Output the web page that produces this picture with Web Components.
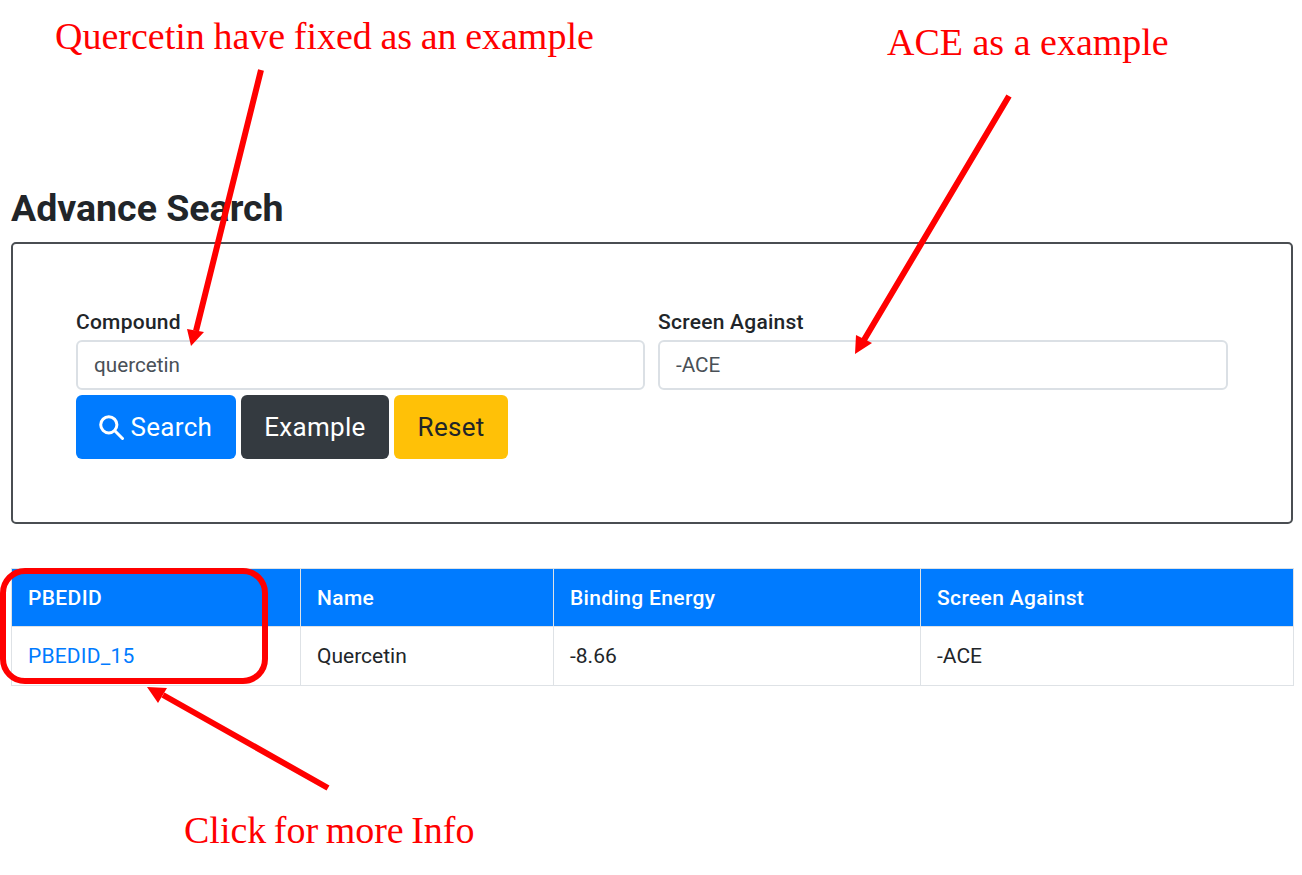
<!DOCTYPE html>
<html>
<head>
<meta charset="utf-8">
<title>Advance Search</title>
<style>
  html, body { margin: 0; background: #fff; }
  body { font-family: Roboto, "Liberation Sans", sans-serif; color: #212529; }
</style>
</head>
<body>

<template id="search-page-tmpl">
  <style>
    :host { display: block; position: relative; width: 1302px; height: 875px; overflow: hidden; box-sizing: border-box; padding: 185px 9px 0 11px; }
    h1 { margin: 0 0 10px; font-size: 37.5px; line-height: 47px; font-weight: 700; color: #212529; }
    search-panel { margin-bottom: 45px; }
  </style>
  <h1>Advance Search</h1>
  <search-panel>
    <form-field slot="left" label="Compound" value="quercetin"></form-field>
    <form-field slot="right" label="Screen Against" value="-ACE"></form-field>
    <ui-button slot="buttons" kind="primary" icon="search">Search</ui-button>
    <ui-button slot="buttons" kind="dark">Example</ui-button>
    <ui-button slot="buttons" kind="warning">Reset</ui-button>
  </search-panel>
  <result-table></result-table>
  <slot></slot>
</template>

<template id="search-panel-tmpl">
  <style>
    :host { display: block; box-sizing: border-box; height: 282px; border: 2px solid #4a4e52; border-radius: 5px; padding: 63px 64px 0 63px; }
    .row { display: grid; grid-template-columns: 569px 570px; column-gap: 13px; }
    .buttons { display: flex; gap: 5px; margin-top: 5px; }
  </style>
  <div class="row">
    <slot name="left"></slot>
    <slot name="right"></slot>
  </div>
  <div class="buttons"><slot name="buttons"></slot></div>
</template>

<template id="form-field-tmpl">
  <style>
    :host { display: block; }
    label { display: block; font-size: 21px; letter-spacing: .25px; line-height: 30px; font-weight: 500; color: #212529; margin-bottom: 3px; }
    .input { box-sizing: border-box; height: 50px; border: 2px solid #dbe0e5; border-radius: 6px; background: #fff; padding: 0 16px; font-size: 20.7px; line-height: 46px; color: #495057; }
  </style>
  <label></label>
  <div class="input"></div>
</template>

<template id="ui-button-tmpl">
  <style>
    :host { display: inline-flex; align-items: center; justify-content: center; box-sizing: border-box; height: 64px; padding: 0 23.5px; border-radius: 6px; font-size: 26px; line-height: 1; gap: 7px; letter-spacing: .3px; }
    :host([kind="primary"]) { background: #007bff; color: #fff; padding-left: 22.5px; }
    :host([kind="dark"]) { background: #343a40; color: #fff; }
    :host([kind="warning"]) { background: #ffc107; color: #212529; }
    svg { width: 25px; height: 25px; display: block; }
  </style>
  <svg viewBox="0 0 25 25" fill="none" stroke="currentColor" stroke-width="3"><circle cx="9.8" cy="9.8" r="8.1"/><path d="M15.8 15.8 L23.5 23.5" stroke-linecap="round"/></svg>
  <slot></slot>
</template>

<template id="result-table-tmpl">
  <style>
    :host { display: block; margin-top: -1px; }
    table { border-collapse: collapse; table-layout: fixed; width: 1282px; font-size: 21px; line-height: 30px; }
    th, td { box-sizing: border-box; padding: 0 16px; text-align: left; border: 1px solid #dee2e6; }
    th { height: 58px; background: #007bff; color: #fff; font-weight: 500; letter-spacing: .35px; }
    td { height: 59px; color: #212529; }
    a { color: #007bff; text-decoration: none; letter-spacing: .2px; }
  </style>
  <table>
    <colgroup><col style="width:289px"><col style="width:253px"><col style="width:367px"><col style="width:373px"></colgroup>
    <thead><tr><th>PBEDID</th><th>Name</th><th>Binding Energy</th><th>Screen Against</th></tr></thead>
    <tbody><tr><td><a href="#">PBEDID_15</a></td><td>Quercetin</td><td>-8.66</td><td>-ACE</td></tr></tbody>
  </table>
</template>

<template id="note-layer-tmpl">
  <style>
    :host { position: absolute; inset: 0; display: block; pointer-events: none; }
    svg { position: absolute; left: 0; top: 0; }
    .note { position: absolute; font-family: "Liberation Serif", "Times New Roman", serif; color: #ff0000; font-size: 38px; line-height: 40px; white-space: nowrap; }
  </style>
  <svg width="1302" height="875" viewBox="0 0 1302 875" fill="none">
    <rect x="3" y="571" width="262" height="110" rx="22" stroke="#ff0000" stroke-width="6"/>
    <path d="M261 70 L196 331 M1009 96 L864 340 M328 788 L163 695" stroke="#ff0000" stroke-width="6"/>
    <path d="M191 346 L187 329 L204 332 Z M855 354 L856 335 L872 343 Z M147 687 L167 688 L158 703 Z" fill="#ff0000"/>
  </svg>
  <div class="note" style="left:55px;top:16px;word-spacing:-.9px">Quercetin have fixed as an example</div>
  <div class="note" style="left:887px;top:22px">ACE as a example</div>
  <div class="note" style="left:184px;top:810px;word-spacing:-2px">Click for more Info</div>
</template>

<search-page><note-layer></note-layer></search-page>

<script>
// small helper, every element just clones its template into an open shadow root
function attach(el, id) {
    const root = el.attachShadow({mode: 'open'});
    root.appendChild(document.getElementById(id).content.cloneNode(true));
    return root;
}

class SearchPage extends HTMLElement {
    constructor() { super(); attach(this, 'search-page-tmpl'); }
}

class SearchPanel extends HTMLElement {
    constructor() { super(); attach(this, 'search-panel-tmpl'); }
}

class FormField extends HTMLElement {
    constructor() { super(); attach(this, 'form-field-tmpl'); }
    connectedCallback() {
        this.shadowRoot.querySelector('label').textContent = this.getAttribute('label');
        this.shadowRoot.querySelector('.input').textContent = this.getAttribute('value');
    }
}

class UiButton extends HTMLElement {
    constructor() { super(); attach(this, 'ui-button-tmpl'); }
    connectedCallback() {
        // only the search button carries the magnifier
        if (!this.hasAttribute('icon')) this.shadowRoot.querySelector('svg').remove();
    }
}

class ResultTable extends HTMLElement {
    constructor() { super(); attach(this, 'result-table-tmpl'); }
}

class NoteLayer extends HTMLElement {
    constructor() { super(); attach(this, 'note-layer-tmpl'); }
}

customElements.define('search-panel', SearchPanel);
customElements.define('form-field', FormField);
customElements.define('ui-button', UiButton);
customElements.define('result-table', ResultTable);
customElements.define('note-layer', NoteLayer);
customElements.define('search-page', SearchPage);
</script>
</body>
</html>
